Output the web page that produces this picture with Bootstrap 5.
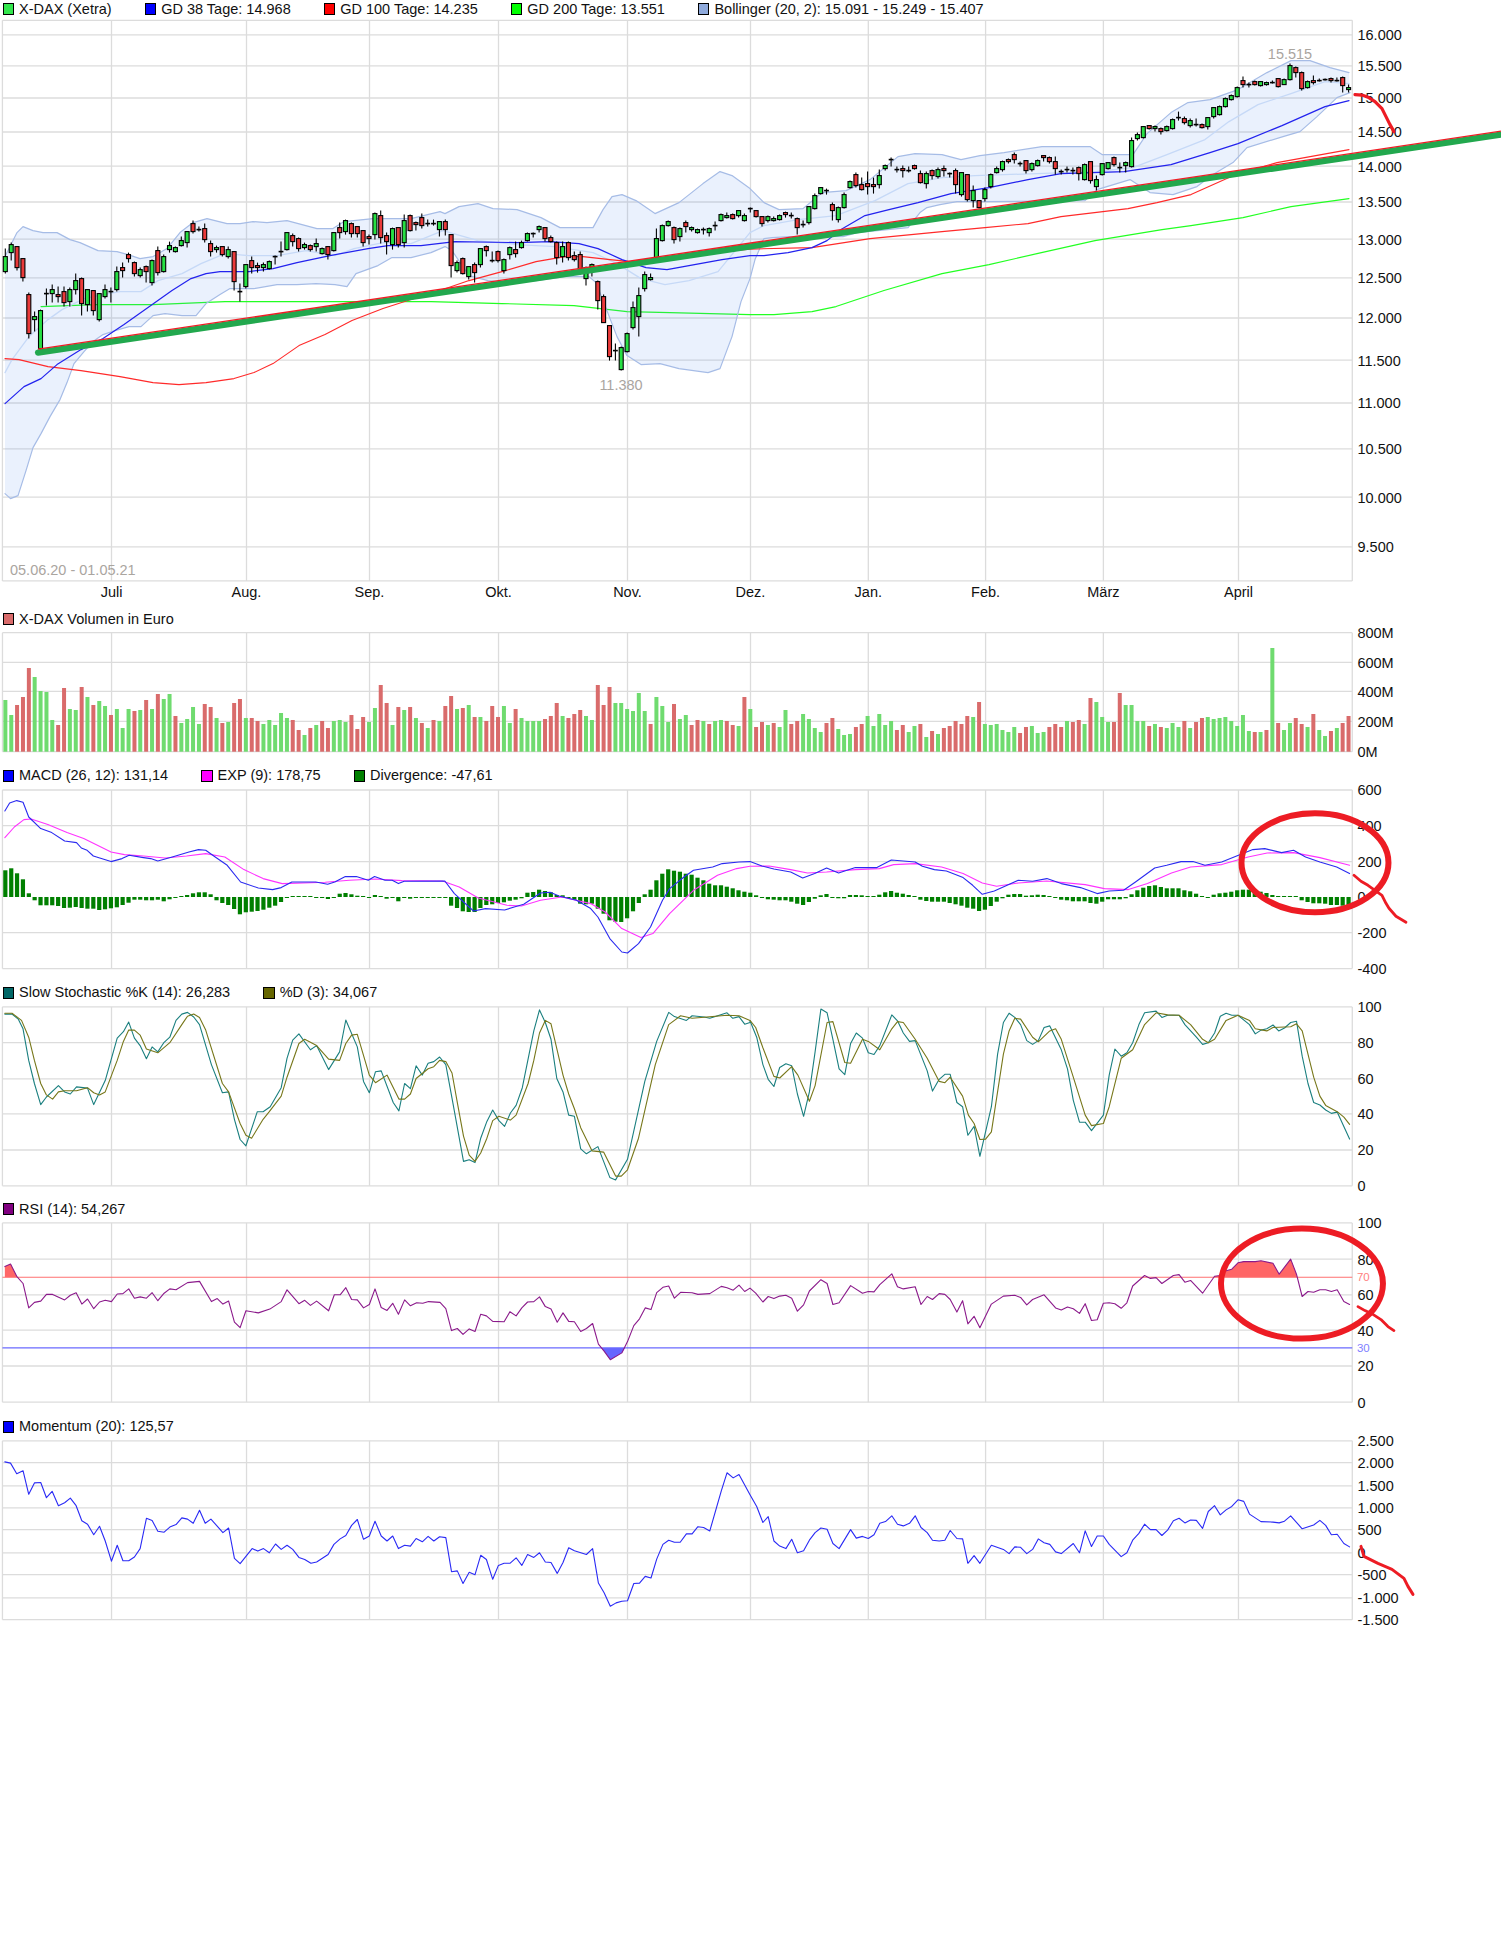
<!DOCTYPE html>
<html lang="de">
<head>
<meta charset="utf-8">
<title>X-DAX Chart</title>
<link href="https://cdn.jsdelivr.net/npm/bootstrap@5.3.0/dist/css/bootstrap.min.css" rel="stylesheet">
<style>
html,body{margin:0;background:#fff}
body{font-family:"Liberation Sans",Arial,sans-serif;font-size:14.5px;color:#111;line-height:1}
.kx-page{width:1501px;height:1960px;overflow:hidden}
.kx-legend{height:20px;gap:33px;padding-left:2.5px;white-space:nowrap}
.kx-legend.kx-first{height:18.4px}
.kx-sw{width:11.5px;height:12px;border:1px solid #000;margin-right:5px;flex:none}
.sw-cand{background:#33e64d}.sw-blue{background:#00f}.sw-red{background:#f00}.sw-lime{background:#0f0}
.sw-boll{background:#8faadc}.sw-vol{background:#d96b6b}.sw-mag{background:#f0f}.sw-green{background:#008000}
.sw-teal{background:#006666}.sw-olive{background:#666600}.sw-pur{background:#800080}
.kx-chart{display:block;overflow:visible;width:1501px}
.kx-chart text{font-family:"Liberation Sans",Arial,sans-serif;font-size:14.5px;fill:#111}
.kx-chart text.kx-grey{fill:#aaa59f}
.kx-chart text.kx-l70{font-size:11.5px;fill:#ff8080}
.kx-chart text.kx-l30{font-size:11.5px;fill:#8080ff}
</style>
</head>
<body>
<main class="kx-page d-flex flex-column">
  <section>
    <div class="kx-legend kx-first d-flex align-items-center">
      <span class="d-flex align-items-center"><i class="kx-sw sw-cand"></i>X-DAX (Xetra)</span>
      <span class="d-flex align-items-center"><i class="kx-sw sw-blue"></i>GD 38 Tage: 14.968</span>
      <span class="d-flex align-items-center"><i class="kx-sw sw-red"></i>GD 100 Tage: 14.235</span>
      <span class="d-flex align-items-center"><i class="kx-sw sw-lime"></i>GD 200 Tage: 13.551</span>
      <span class="d-flex align-items-center"><i class="kx-sw sw-boll"></i>Bollinger (20, 2): 15.091 - 15.249 - 15.407</span>
    </div>
    <svg class="kx-chart" id="p-main" xmlns="http://www.w3.org/2000/svg"></svg>
  </section>
  <section>
    <div class="kx-legend d-flex align-items-center">
      <span class="d-flex align-items-center"><i class="kx-sw sw-vol"></i>X-DAX Volumen in Euro</span>
    </div>
    <svg class="kx-chart" id="p-vol" xmlns="http://www.w3.org/2000/svg"></svg>
  </section>
  <section>
    <div class="kx-legend d-flex align-items-center">
      <span class="d-flex align-items-center"><i class="kx-sw sw-blue"></i>MACD (26, 12): 131,14</span>
      <span class="d-flex align-items-center"><i class="kx-sw sw-mag"></i>EXP (9): 178,75</span>
      <span class="d-flex align-items-center"><i class="kx-sw sw-green"></i>Divergence: -47,61</span>
    </div>
    <svg class="kx-chart" id="p-macd" xmlns="http://www.w3.org/2000/svg"></svg>
  </section>
  <section>
    <div class="kx-legend d-flex align-items-center">
      <span class="d-flex align-items-center"><i class="kx-sw sw-teal"></i>Slow Stochastic %K (14): 26,283</span>
      <span class="d-flex align-items-center"><i class="kx-sw sw-olive"></i>%D (3): 34,067</span>
    </div>
    <svg class="kx-chart" id="p-sto" xmlns="http://www.w3.org/2000/svg"></svg>
  </section>
  <section>
    <div class="kx-legend d-flex align-items-center">
      <span class="d-flex align-items-center"><i class="kx-sw sw-pur"></i>RSI (14): 54,267</span>
    </div>
    <svg class="kx-chart" id="p-rsi" xmlns="http://www.w3.org/2000/svg"></svg>
  </section>
  <section>
    <div class="kx-legend d-flex align-items-center">
      <span class="d-flex align-items-center"><i class="kx-sw sw-blue"></i>Momentum (20): 125,57</span>
    </div>
    <svg class="kx-chart" id="p-mom" xmlns="http://www.w3.org/2000/svg"></svg>
  </section>
</main>
<script src="https://cdn.jsdelivr.net/npm/bootstrap@5.3.0/dist/js/bootstrap.bundle.min.js"></script>
<script>
const XL=2.4,XR=1352.3;
const VX=[XL,111.5,246.5,369.5,498.5,627.5,750.5,868.3,985.6,1103.4,1238.5,XR];
const cx=i=>5.3+5.866*i;
const f=n=>Math.round(n*10)/10;
function conv(l,r,y0,ys){
  const a=l.trim().split(/\s+/).map(p=>{const[x,y]=p.split(',').map(Number);return f(x/2.0907)+','+f(y0+y/ys)});
  const b=r?r.trim().split(/\s+/).map(p=>{const[x,y]=p.split(',').map(Number);return f(750+x/2.088)+','+f(y0+y/ys)}):[];
  return a.concat(b).join(' ');
}
function pl(p,c,w,extra){return `<polyline points="${p}" fill="none" stroke="${c}" stroke-width="${w}" stroke-linejoin="round" stroke-linecap="round" ${extra||''}/>`}
function grid(ys,top,bot){
  let s='';
  ys.forEach(y=>s+=`<line x1="${XL}" x2="${XR}" y1="${y}" y2="${y}" stroke="#dcdcdc" stroke-width="1.3"/>`);
  VX.forEach(x=>s+=`<line x1="${x}" x2="${x}" y1="${top}" y2="${bot}" stroke="#dcdcdc" stroke-width="1.3"/>`);
  return s;
}
function labels(a){return a.map(([t,y])=>`<text x="1357.5" y="${y}" dy="5.5">${t}</text>`).join('')}
function mount(id,y,h,html){const e=document.getElementById(id);e.setAttribute('viewBox',`0 ${y} 1501 ${h}`);e.setAttribute('height',h);e.innerHTML=html}

/* ---------- main ---------- */
const candles="g257,272,249,274;g245,253,243,261;r247,268,247,271;r259,278,259,282;r295,334,293,339;g317,320,312,332;g311,349,310,352;d294,289,306;g290,294,285,303;r295,297,287,303;r292,303,287,307;g290,302,288,307;g281,290,274,295;r279,304,278,316;g290,305,290,312;r291,311,291,316;g294,320,294,322;g290,297,285,299;d292,288,303;g272,290,267,292;r268,271,263,278;r255,259,253,263;r263,274,262,277;g270,276,268,278;r267,272,266,283;g261,283,260,286;r251,273,247,276;g257,272,255,273;g246,250,242,253;g248,252,247,253;g241,246,237,247;g232,243,232,248;r224,232,221,234;d230,227,232;r229,240,224,243;r244,252,241,257;g248,250,246,253;r247,255,247,257;g250,257,247,259;r252,282,252,291;d292,284,302;g265,287,265,289;r261,268,257,274;r266,268,263,273;g265,268,263,272;g262,269,261,270;d257,256,265;d252,242,257;g233,250,233,251;r236,242,234,247;r239,249,238,252;g245,248,243,250;r246,250,245,252;g244,247,239,252;g249,254,248,255;r247,255,247,260;g233,251,233,252;r228,233,223,239;g221,232,220,235;"+
"r224,234,223,238;r227,234,227,238;r231,243,231,247;r237,239,235,245;g214,235,213,240;r216,238,211,244;r236,242,233,255;g229,245,228,250;r228,245,228,248;g221,243,215,248;r216,231,215,232;r223,225,222,231;r218,226,214,229;d224,220,227;d224,220,226;g222,230,222,237;r222,230,220,236;r235,266,235,278;g263,271,261,273;r259,274,258,275;g267,277,267,280;r265,273,263,283;g249,265,249,268;r247,251,246,257;d261,252,263;r252,261,251,263;g260,271,259,274;g248,255,247,260;r250,254,242,258;g243,248,241,249;g234,241,233,242;d234,233,238;g227,230,226,233;r228,239,228,242;r238,242,236,243;r243,258,242,265;g247,257,242,263;r243,258,242,261;r256,260,252,262;r255,269,252,275;g268,279,267,286;g265,268,264,277;r282,301,281,310;r297,323,295,323;r326,357,326,361;d351,344,361;g348,370,347,371;g334,352,333,353;g308,328,302,330;g296,317,288,337;g275,289,272,292;g278,280,274,281;g239,258,229,259;g226,241,225,242;g222,226,221,227;r228,240,227,244;g229,237,228,242;r223,227,221,233;g228,230,227,232;g230,233,229,234;"+
"d230,228,235;g229,233,228,237;d226,222,231;g215,221,214,222;g216,218,213,219;r215,219,214,220;g211,216,211,218;g216,221,214,222;d209,208,213;r211,217,211,218;r217,224,217,227;g217,221,216,223;g219,221,217,222;g216,220,215,221;r213,215,212,218;d216,213,219;r219,228,218,235;d225,221,228;g207,223,207,225;g196,209,194,210;g188,194,188,195;d191,189,195;r205,211,203,221;g208,220,207,223;g195,208,193,209;g182,188,181,189;r175,186,173,188;r185,190,178,191;r184,187,172,195;r185,187,178,194;g176,185,170,189;g166,169,165,171;d160,158,167;d170,167,173;r169,171,166,178;d171,167,173;r166,169,165,170;r174,183,171,184;g174,184,172,189;r171,176,170,180;g170,177,168,179;r169,171,166,177;d174,173,178;r171,185,169,194;g173,195,173,197;r175,200,175,202;g191,201,186,208;r201,208,201,209;g190,199,188,202;g175,187,174,189;g169,173,167,174;g162,170,161,172;r160,162,159,164;r155,160,153,164;d164,162,167;r161,171,161,174;g164,170,163,172;g161,166,160,167;r156,158,156,162;r158,162,157,164;"+
"r162,169,157,175;d172,170,175;d170,167,173;d171,168,175;r168,174,167,181;g165,180,164,181;r162,181,162,184;g180,187,176,191;g164,175,164,176;g163,169,163,170;r158,165,157,167;d168,163,173;g163,166,162,173;g141,167,138,168;g135,139,133,141;g127,138,127,139;r126,129,126,130;g127,129,126,132;r129,132,128,135;g127,131,126,132;g120,129,119,130;d118,112,121;r119,123,117,125;g121,126,119,128;d125,119,127;r125,128,124,129;g118,127,118,130;g108,117,108,119;g107,115,106,116;g99,107,98,108;g96,100,95,101;g88,97,87,98;r81,85,77,88;d85,83,88;r82,85,81,86;g82,86,82,87;g83,85,82,86;d83,81,84;r79,87,79,88;g80,85,79,85;g66,80,64,81;r68,73,67,78;r73,89,72,91;g82,88,81,89;r81,83,76,85;d81,79,82;d80,79,81;r79,81,78,83;d81,78,82;r78,86,77,93;g88,90,85,93";
function drawCandles(){
  let s='';
  candles.split(';').forEach((c,i)=>{
    const t=c[0],v=c.slice(1).split(',').map(Number),x=f(cx(i));
    if(t==='d'){
      s+=`<line x1="${x}" x2="${x}" y1="${v[1]}" y2="${v[2]}" stroke="#000" stroke-width="1.1"/><line x1="${x-2.4}" x2="${x+2.4}" y1="${v[0]}" y2="${v[0]}" stroke="#000" stroke-width="1.6"/>`;
    }else{
      s+=`<line x1="${x}" x2="${x}" y1="${v[2]}" y2="${v[3]}" stroke="#000" stroke-width="1.1"/><rect x="${f(x-2)}" y="${v[0]}" width="4" height="${v[1]-v[0]}" fill="${t==='g'?'#27e043':'#ea3a3a'}" stroke="#000" stroke-width="1.1"/>`;
    }
  });
  return s;
}
const upper="5,257 17,233 23,227 33,231 43,233 57,233 70,240 80,243 98,251 117,252 128,255 140,259 153,257 167,249 180,233 193,223 207,219 227,224 240,224 253,222 267,223 287,221 317,229 333,229 344,222 373,219 411,219 440,212 445,214 459,207 478,204 493,209 517,210 541,218 560,228 593,228 603,210 612,197 622,195 636,201 655,214 679,203 703,184 720,172 732,176 750,189 764,203 779,210 803,209 822,193 846,191 870,180 898,157 915,154 942,155 961,160 980,156 1004,153 1042,147 1090,147 1102,155 1133,155 1147,134 1171,113 1188,103 1210,100 1238,90 1267,73 1291,61 1310,61 1330,68 1349,73";
const lower="5,494 10.5,499 18,496 26,471 33,448 41,434 50,417 60,400 67,383 74,364 84,352 93,342 103,335 115,331 129,327 141,327 153,316 165,314 182,316 196,316 206,304 220,295 230,289 239,289 254,289 277,285 297,285 316,284 335,285 347,287 356,274 378,266 392,258 411,258 431,253 445,247 452,251 469,276 488,281 507,283 536,281 565,277 589,277 596,283 605,306 617,337 627,356 641,365 660,364 679,369 708,373 720,369 732,337 741,302 750,279 755,260 764,239 772,238 790,237 843,237 857,233 908,228 920,213 927,208 940,205 957,202 987,202 1085,201 1097,190 1130,180 1150,193 1173,195 1197,187 1213,175 1233,163 1247,148 1283,137 1300,132 1317,117 1337,98 1350,93";
const mid="5,373 12,360 29,337 48,320 62,310 84,299 103,295 120,292 141,292 158,281 182,274 201,264 225,254 249,256 277,256 306,251 335,256 354,249 383,243 411,244 443,231 478,241 517,245 555,247 593,253 617,264 641,279 665,285 689,281 718,272 750,233 764,226 798,220 836,216 875,201 908,184 942,178 975,176 1037,174 1095,172 1133,168 1167,155 1205,140 1229,122 1258,105 1291,94 1325,82 1349,84";
const gd38="5,404 24,387 41,379 57,365 81,350 103,339 124,325 148,308 172,291 191,279 206,274 220,272 249,272 273,269 297,263 330,256 368,249 388,246 421,246 455,242 517,243 550,242 579,244 598,249 622,260 646,268 667,270 689,266 722,260 750,256 764,256 788,253 812,248 827,241 841,230 865,216 889,210 918,203 951,194 989,188 1028,180 1061,174 1124,172 1171,165 1210,153 1238,144 1282,126 1325,107 1349,101";
const gd100="5,359 19,360 48,367 81,371 120,377 153,383 179,385 206,383 234,379 254,373 273,364 299,346 325,335 352,321 383,309 411,300 440,291 469,281 502,272 536,262 565,257 583,257 610,260 630,262 653,259 700,254 750,249.5 812,248 870,239 942,232 985,228 1028,224 1061,217 1128,209 1157,203 1191,195 1238,174 1277,163 1349,150";
const gd200="41,307 96,305 153,305 225,302 287,302 359,302 431,302 502,304 574,306 627,312 670,313 750,315 774,315 812,312 836,307 884,291 942,274 989,265 1037,254 1095,241 1162,230 1191,226 1243,218 1291,207 1349,199";
function bandFill(){
  const u=upper.split(' ');const l=lower.split(' ').reverse();
  return `<polygon points="${u.concat(l).join(' ')}" fill="#5a8cf0" fill-opacity=".125" stroke="none"/>`;
}
const ygrid=[35.2,66.2,98.4,132.4,166.5,202.4,239.6,278.2,318.4,360.5,403.4,449.3,497.5,547.3];
const mlabels=['16.000','15.500','15.000','14.500','14.000','13.500','13.000','12.500','12.000','11.500','11.000','10.500','10.000','9.500'];
const months=[['Juli',111.5],['Aug.',246.5],['Sep.',369.5],['Okt.',498.5],['Nov.',627.5],['Dez.',750.5],['Jan.',868.3],['Feb.',985.6],['März',1103.4],['April',1238.5]];
let main=grid(ygrid.concat([20.7,581.3]),20.7,581.3);
main+=pl(gd200,'#22ff22',1.1)+bandFill()+pl(mid,'#c6d9f7',1.3)+pl(upper,'#a6bce6',1.2)+pl(lower,'#a6bce6',1.2);
main+=pl(gd100,'#ff2a2a',1.1)+pl(gd38,'#2222ee',1.2);
main+=drawCandles();
main+=`<line x1="38" y1="353" x2="1501" y2="135" stroke="#22a84e" stroke-width="6.2" stroke-linecap="round"/><line x1="38" y1="349.6" x2="1501" y2="131.6" stroke="#f01c24" stroke-width="1.3"/>`;
main+=labels(mlabels.map((t,i)=>[t,ygrid[i]]));
months.forEach(([t,x])=>main+=`<text x="${x}" y="597" text-anchor="middle">${t}</text>`);
main+=`<text class="kx-grey" x="1290" y="59" text-anchor="middle">15.515</text><text class="kx-grey" x="621" y="390" text-anchor="middle">11.380</text><text class="kx-grey" x="10" y="575">05.06.20 - 01.05.21</text>`;
main+=pl("1355,95 1362,95.5 1368,97.6 1375,102 1382,109 1386,117 1390,125 1394,132",'#ed1c24',3.2);
mount('p-main',18.4,590.6,main);

/* ---------- volume ---------- */
const vols="g300 g345 r315 r291 r204 g231 g273 g276 g360 r375 r264 g327 g330 r261 g291 r315 g303 g318 r345 g327 g384 g327 r333 g330 r300 g327 r282 g297 g282 r348 g369 g357 g321 g372 r312 r321 g354 r369 g366 r309 r297 g354 r354 r363 g372 g360 g375 g339 g354 r360 r390 g405 r384 g375 r363 r384 g363 g360 g366 r345 r387 r351 g366 g324 r255 r309 g375 r321 g330 r321 g354 r369 g384 r360 g363 r318 r288 g327 r324 g315 r351 g351 r363 r318 r351 g318 g369 r327 g354 g363 g363 g363 r357 r348 r309 g348 r354 r342 r330 g348 g360 r255 r315 r261 g309 g309 g327 g333 g279 g333 r372 g291 g318 g366 r312 g357 g345 r375 r360 g363 r372 g363 g360 r363 r375 g378 r291 g327 r381 r366 g375 r369 g381 g330 r372 r363 g342 g357 g384 g396 r369 r354 g387 g405 g402 r381 r372 g348 g378 g342 g375 g363 r390 r375 g396 g378 r372 g411 r393 g402 r384 r378 r363 r372 r348 g351 r306 g372 g375 g372 g390 g396 g381 r399 r381 g378 g399 g396 r381 r372 r381 g363 r366 r360 g372 r294 g306 g351 g366 r366 r279 g315 g315 g363 g363 r378 g372 r381 g384 g369 g381 r363 g384 r366 r354 g351 g357 g354 g351 g363 g378 g345 g393 r396 g396 r390 g144 r369 g390 g369 r354 r372 g381 r342 g390 g408 r393 g384 r369 r348".split(' ');
let vs=grid([632.7,662.3,691.3,721.3,751.7],632.7,751.7);
vols.forEach((v,i)=>{const y=600+ +v.slice(1)/3;vs+=`<rect x="${f(cx(i)-2)}" y="${f(y)}" width="4" height="${f(751.7-y)}" fill="${v[0]==='g'?'#6fdb6f':'#d96b6b'}"/>`});
vs+=labels([['800M',632.7],['600M',662.3],['400M',691.3],['200M',721.3],['0M',751.7]]);
mount('p-vol',629,136.7,vs);

/* ---------- MACD ---------- */
const hist=[80,86,71,53,11,-10,-25,-25,-25,-27,-33,-32,-30,-33,-35,-35,-39,-37,-34,-31,-24,-17,-8,-8,-10,-10,-8,-13,-7,-3,3,6,11,14,14,8,-10,-18,-24,-36,-52,-46,-44,-42,-38,-32,-26,-15,0,3,2,1,1,-1,-3,-6,-3,10,12,8,4,1,-3,6,2,-5,-3,-13,-3,-5,-3,-3,-2,-2,-2,-3,-26,-33,-43,-45,-45,-33,-24,-22,-18,-16,-11,-8,-4,13,15,22,18,14,6,5,-3,-9,-20,-22,-20,-35,-50,-70,-74,-75,-64,-43,-18,8,22,50,70,83,79,76,70,67,58,50,40,35,35,31,26,20,16,
13,5,-3,-7,-8,-10,-10,-14,-20,-24,-15,-5,5,9,-2,-4,-4,6,6,5,3,3,7,14,18,13,10,6,3,-8,-12,-14,-14,-14,-18,-22,-26,-32,-35,-42,-38,-27,-14,-4,7,9,9,4,5,7,6,3,-3,-8,-10,-13,-13,-13,-18,-20,-14,-7,-7,-7,-4,8,20,28,33,35,30,26,26,26,20,17,10,3,-1,7,11,13,16,20,22,22,18,16,12,6,1,1,3,1,-10,-15,-19,-19,-20,-24,-24,-26,-26];
const mblue=conv("10,632 20,608 35,601 48,606 60,650 85,685 108,697 135,722 160,727 170,743 182,750 195,767 232,784 255,775 270,765 300,772 315,775 330,782 360,770 395,755 415,748 430,750 450,770 475,795 503,845 540,863 570,868 588,862 610,845 660,845 685,852 700,845 722,829 745,829 770,840 783,829 805,840 820,840 833,850 845,843 930,842 950,880 990,932 1015,925 1055,929 1075,920 1095,912 1130,878 1150,876 1170,888 1205,900 1235,925 1250,950 1275,1015 1300,1055 1312,1058 1335,1030 1360,980 1385,900 1400,865 1430,830 1450,810 1490,800 1510,790 1545,785 1568,784","25,797 50,806 85,815 110,833 135,820 160,803 185,818 220,802 265,802 295,779 345,785 360,798 385,808 410,812 445,832 465,855 485,882 510,872 560,840 590,843 620,835 650,850 690,862 725,880 750,872 780,870 805,845 845,803 870,795 900,784 925,784 950,795 985,785 1020,765 1050,748 1075,745 1110,757 1135,750 1160,770 1190,785 1225,800 1252,820",600,3);
const mmag=conv("10,712 30,680 50,658 65,656 100,673 140,697 175,715 232,755 260,763 300,767 345,773 390,767 430,760 470,770 510,808 550,835 590,850 680,846 730,840 785,836 840,841 925,842 960,860 1000,893 1060,915 1090,917 1130,900 1175,890 1235,910 1265,935 1300,985 1340,1012 1365,1000 1400,940 1450,870 1500,825 1540,805 1568,798","40,797 85,808 120,818 160,815 220,808 270,805 300,793 345,790 400,800 445,820 485,848 515,858 560,848 620,842 700,853 740,865 790,868 830,850 880,818 920,800 985,793 1040,770 1080,758 1135,757 1190,772 1252,795",600,3);
let ms=grid([789.7,825.3,861.3,932.3,968.3],789.7,968.3);
hist.forEach((d,i)=>{const h=Math.max(Math.abs(d)/3,1);const y=d>0?896.7-h:896.7;ms+=`<rect x="${f(cx(i)-2.1)}" y="${f(y)}" width="4.2" height="${f(h)}" fill="#007f00"/>`});
ms+=pl(mmag,'#ff33ff',1.1)+pl(mblue,'#2a2af0',1.1);
ms+=labels([['600',789.7],['400',825.3],['200',861.3],['0',896.7],['-200',932.3],['-400',968.3]]);
ms+=`<ellipse cx="1315" cy="862.5" rx="73.5" ry="49.5" fill="none" stroke="#ed1c24" stroke-width="6"/>`;
ms+=pl("1354,875 1361,881 1368,885 1375,890 1382,895 1386,903 1389,908 1396,916 1406,922",'#ed1c24',2.8);
mount('p-macd',785.7,196.9,ms);

/* ---------- Stochastic ---------- */
const k=conv("10,80 25,80 38,92 48,115 60,190 72,245 85,295 97,277 122,250 135,265 147,270 160,253 183,256 196,295 220,238 245,137 258,122 269,99 281,137 293,155 306,186 318,158 330,170 343,147 355,135 368,95 380,80 392,76 405,87 417,105 442,200 465,267 478,265 490,330 502,378 514,393 538,312 550,312 565,300 588,255 600,185 612,142 625,127 649,165 662,155 687,212 710,170 723,94 747,158 760,240 772,267 785,217 797,215 822,290 834,310 846,245 858,257 870,203 883,225 895,197 907,193 919,182 932,200 945,280 969,430 981,426 993,433 1005,375 1018,335 1030,308 1043,333 1055,347 1067,315 1079,297 1092,255 1116,120 1128,70 1140,100 1152,140 1164,233 1177,265 1189,320 1201,323 1214,400 1226,412 1250,395 1262,430 1275,468 1287,474 1312,425 1348,240 1373,145 1398,76 1410,86 1435,95 1447,84 1472,87 1484,90 1520,77 1532,90 1545,86 1557,104 1568,100","0,96 14,135 27,200 38,235 50,252 62,207 75,198 87,203 99,270 112,323 124,265 136,170 148,68 161,77 173,140 186,210 198,224 210,150 222,125 235,137 247,172 259,176 271,155 296,82 308,96 320,125 333,145 345,143 370,215 381,263 395,235 407,223 418,223 432,290 444,300 455,368 468,347 480,418 504,300 517,175 529,100 541,78 553,88 565,105 578,143 590,152 602,143 614,112 626,108 650,165 663,210 675,285 688,337 700,337 713,357 738,320 750,225 762,163 775,180 787,172 799,148 812,105 824,77 848,73 860,88 872,83 896,83 908,105 932,135 945,152 957,148 970,125 982,85 994,78 1006,83 1019,83 1043,105 1055,127 1067,118 1079,115 1092,106 1104,120 1116,113 1129,100 1141,97 1153,180 1165,245 1177,290 1190,296 1202,308 1214,316 1226,313 1252,377",980,2.376);
const dd=conv("10,78 25,78 45,95 60,135 72,190 85,245 97,272 110,282 122,265 135,262 160,262 183,255 196,267 208,272 220,265 245,190 258,145 269,118 281,118 293,130 306,163 330,172 355,148 380,105 392,85 405,80 417,88 430,118 465,245 478,265 502,340 514,368 526,375 550,330 563,312 588,275 600,230 625,150 637,140 662,155 687,187 710,190 723,150 735,130 747,128 772,225 785,243 809,225 834,282 846,282 858,270 870,233 895,210 907,205 919,190 932,193 945,220 957,295 969,370 981,415 993,430 1005,410 1018,375 1030,333 1043,323 1067,332 1079,320 1104,245 1116,190 1128,125 1140,95 1152,103 1177,225 1189,270 1201,305 1214,350 1238,405 1262,408 1287,465 1299,465 1312,450 1335,375 1370,200 1398,105 1423,84 1447,90 1520,83 1545,84 1568,95","12,112 27,160 50,228 62,232 87,205 100,225 124,287 136,250 161,100 173,98 198,195 210,197 235,140 247,145 271,165 296,115 308,98 320,100 345,140 370,185 395,240 407,243 418,230 444,275 456,320 468,340 480,378 492,377 504,360 529,175 541,120 553,90 565,92 590,135 602,146 626,120 638,115 650,140 675,230 700,320 713,345 738,340 750,300 775,185 799,165 824,105 848,77 872,82 896,83 920,105 945,140 957,148 970,140 994,95 1019,83 1043,95 1055,115 1079,120 1092,112 1129,110 1141,103 1153,120 1177,230 1190,275 1202,297 1226,312 1240,325 1252,342",980,2.376);
let st=grid([1006.5,1042.3,1078.5,1113.4,1149.6,1185.4],1006.5,1185.4);
st+=pl(k,'#1a7f7f',1.1)+pl(dd,'#77771a',1.1);
st+=labels([['100',1006.5],['80',1042.3],['60',1078.5],['40',1113.4],['20',1149.6],['0',1185.4]]);
mount('p-sto',1002.6,196.8,st);

/* ---------- RSI ---------- */
const rsi=conv("10,682 22,676 35,705 48,722 60,780 72,767 85,764 97,748 110,748 135,761 147,750 159,744 171,771 183,759 196,782 208,766 220,762 233,765 245,747 257,746 269,735 281,757 293,754 306,757 318,744 330,763 343,745 355,735 368,737 392,720 417,717 442,765 454,758 466,771 478,764 490,814 502,827 514,787 540,792 564,783 588,765 600,737 625,770 637,762 649,774 662,764 687,787 699,749 711,749 723,732 735,760 747,761 760,780 772,772 784,735 797,779 809,786 821,769 833,795 846,761 858,775 871,768 884,769 896,765 920,767 932,782 944,834 956,829 968,843 981,830 993,836 1005,795 1017,799 1030,812 1054,813 1066,789 1079,799 1091,780 1103,766 1116,765 1128,754 1140,777 1152,783 1165,814 1177,792 1189,812 1201,813 1214,836 1226,829 1239,817 1251,866 1263,883 1276,903 1300,887 1312,860 1325,822 1337,806 1349,780 1361,784 1373,744 1386,731 1398,728 1410,757 1423,743 1447,744 1459,748 1484,746 1508,729 1520,732 1533,738 1545,726 1557,741 1568,733","12,745 27,766 38,753 50,758 62,752 75,750 87,757 99,788 112,773 124,740 148,713 161,722 173,772 186,768 210,727 235,745 247,741 259,742 271,725 296,699 308,730 320,735 345,730 357,772 370,753 381,760 395,746 407,748 418,760 432,790 444,763 455,818 468,800 480,827 504,771 529,752 553,750 565,755 578,773 590,760 614,749 638,780 650,785 663,778 675,782 688,793 700,770 713,810 725,808 738,769 750,768 762,770 775,781 787,768 799,728 824,703 836,710 848,708 860,722 884,703 896,701 908,719 920,715 945,745 970,705 982,703 994,692 1006,688 1019,673 1031,670 1055,670 1067,668 1092,674 1105,700 1129,664 1141,700 1153,753 1165,741 1177,743 1190,737 1202,737 1214,741 1226,737 1240,765 1252,772",980,2.376);
const redL=conv("10,707 10,682 22,676 35,705 37,707","",980,2.376);
const redR=conv("0,0","969,707 970,705 982,703 994,692 1006,688 1019,673 1031,670 1055,670 1067,668 1092,674 1105,700 1129,664 1141,700 1143,707",980,2.376).split(' ').slice(1).join(' ');
const blueF=conv("1258,875 1276,903 1300,887 1307,875","",980,2.376);
let rs=grid([1223.3,1259.5,1295.2,1330.6,1366.4,1402.6],1223.3,1402.6);
rs+=`<polygon points="${redL}" fill="#ff6666"/><polygon points="${redR}" fill="#ff6666"/><polygon points="${blueF}" fill="#6666ff"/>`;
rs+=`<line x1="${XL}" x2="${XR}" y1="1277.6" y2="1277.6" stroke="#ff7070" stroke-width="1.1"/><line x1="${XL}" x2="${XR}" y1="1348.3" y2="1348.3" stroke="#6a6aff" stroke-width="1.3"/>`;
rs+=pl(rsi,'#8b1a8b',1.1);
rs+=labels([['100',1223.3],['80',1259.5],['60',1295.2],['40',1330.6],['20',1366.4],['0',1402.6]]);
rs+=`<text class="kx-l70" x="1357" y="1281.6">70</text><text class="kx-l30" x="1357" y="1352.3">30</text>`;
rs+=`<ellipse cx="1302" cy="1284" rx="81" ry="55" fill="none" stroke="#ed1c24" stroke-width="6"/>`;
rs+=pl("1358,1307 1365,1311 1372.6,1314.6 1381,1320 1388,1327 1394,1331",'#ed1c24',2.8);
mount('p-rsi',1219.4,197.2,rs);

/* ---------- Momentum ---------- */
const mom=conv("10,1144 22,1147 35,1172 48,1165 60,1221 72,1194 85,1193 97,1229 109,1214 122,1248 135,1241 147,1230 159,1248 171,1284 183,1292 196,1317 208,1297 220,1332 233,1380 245,1342 257,1379 269,1379 281,1370 293,1350 306,1278 318,1283 330,1309 343,1311 355,1299 368,1293 380,1277 392,1280 404,1290 417,1259 429,1290 441,1280 466,1312 478,1301 490,1373 502,1386 527,1350 539,1356 551,1350 563,1360 576,1339 588,1352 600,1342 612,1352 625,1371 637,1376 650,1385 662,1382 686,1364 698,1340 711,1327 723,1319 735,1295 747,1281 760,1328 772,1320 784,1285 797,1320 809,1332 821,1320 833,1350 846,1342 858,1344 870,1326 883,1334 895,1321 907,1332 919,1322 932,1324 944,1405 956,1403 968,1433 981,1406 993,1412 1005,1366 1017,1376 1030,1423 1042,1390 1054,1385 1066,1385 1079,1372 1091,1390 1103,1364 1116,1371 1128,1360 1140,1382 1152,1383 1165,1409 1177,1383 1189,1348 1201,1355 1226,1364 1239,1350 1251,1432 1263,1455 1276,1487 1288,1479 1300,1475 1312,1474 1325,1433 1337,1432 1349,1416 1361,1420 1373,1375 1386,1340 1398,1330 1410,1335 1422,1335 1435,1315 1447,1315 1459,1298 1471,1300 1484,1308 1508,1213 1520,1170 1533,1182 1545,1174 1568,1222","14,1250 27,1288 38,1274 50,1332 62,1344 75,1350 87,1328 99,1360 112,1355 124,1330 136,1312 148,1301 161,1304 173,1338 186,1350 210,1305 222,1325 235,1321 247,1326 259,1317 271,1290 283,1286 296,1272 308,1292 320,1296 333,1290 345,1272 357,1300 370,1312 381,1330 395,1332 407,1330 418,1307 432,1326 444,1327 455,1385 468,1367 480,1385 504,1342 529,1352 541,1362 553,1346 565,1347 578,1362 590,1352 602,1327 614,1336 626,1340 638,1358 650,1362 675,1338 688,1360 700,1308 713,1345 725,1320 738,1320 750,1340 775,1369 787,1360 799,1330 812,1314 824,1292 836,1305 848,1305 860,1319 872,1306 884,1284 896,1278 908,1289 920,1282 932,1283 945,1302 957,1262 970,1248 982,1270 994,1258 1006,1250 1019,1234 1031,1238 1043,1268 1067,1286 1092,1287 1105,1289 1116,1285 1129,1272 1153,1303 1177,1294 1190,1283 1202,1295 1214,1317 1226,1316 1240,1338 1252,1346",980,2.376);
const mgrid=[1440.4,1462.3,1485.5,1507.4,1529.2,1552.4,1574.3,1597.4,1619.3];
let mo=grid(mgrid,1440.4,1619.3);
mo+=pl(mom,'#2a2af5',1.1);
mo+=labels(['2.500','2.000','1.500','1.000','500','0','-500','-1.000','-1.500'].map((t,i)=>[t,mgrid[i]]));
mo+=pl("1361,1546 1364,1556 1378,1563 1392,1569 1404,1578 1408,1586 1413,1594",'#ed1c24',3);
mount('p-mom',1436.6,203.4,mo);
</script>
</body>
</html>
